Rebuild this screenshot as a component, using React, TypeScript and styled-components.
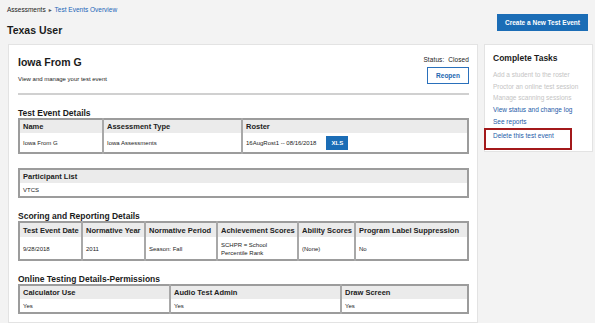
import styled, { createGlobalStyle } from 'styled-components'

const GlobalStyle = createGlobalStyle`
  html, body {
    margin: 0;
    padding: 0;
    background: #f3f3f3;
  }
  body {
    font-family: "Liberation Sans", Arial, sans-serif;
    color: #1b1b1b;
  }
`

const Page = styled.div`
  width: 595px;
  height: 323px;
  overflow: hidden;
  padding-left: 7px;
  box-sizing: border-box;
`

const TopBar = styled.header`
  height: 44px;
  padding-right: 7px;
  display: flex;
  justify-content: space-between;
  align-items: flex-start;
`

const Breadcrumb = styled.nav`
  margin-top: 6px;
  font-size: 6.5px;
  line-height: 8px;
  color: #222;
  display: flex;
  gap: 2px;
  align-items: center;
`

const Crumb = styled.span<{ $link?: boolean }>`
  color: ${(p) => (p.$link ? '#2266b8' : '#222')};
`

const CrumbArrow = styled.span`
  font-size: 5px;
  color: #555;
`

const PageTitle = styled.h1`
  margin: 10px 0 0;
  font-size: 10.5px;
  line-height: 13px;
  font-weight: bold;
`

const PrimaryButton = styled.button`
  margin-top: 14px;
  width: 91px;
  height: 17px;
  border: none;
  background: #1b6db6;
  color: #fff;
  font-family: inherit;
  font-size: 6.5px;
  font-weight: bold;
  padding: 0;
`

const Columns = styled.div`
  display: flex;
  align-items: flex-start;
  gap: 6px;
  margin-left: 1px;
`

const Card = styled.section`
  flex: 0 0 470px;
  box-sizing: border-box;
  background: #fff;
  border: 1px solid #e3e3e3;
  padding: 11px 8px 8px 9px;
`

const CardHead = styled.div`
  display: flex;
  justify-content: space-between;
  align-items: flex-start;
`

const EventTitle = styled.h2`
  margin: 0;
  font-size: 10.5px;
  line-height: 13px;
  font-weight: bold;
`

const Subtitle = styled.p`
  margin: 6px 0 0;
  font-size: 6px;
  line-height: 8px;
`

const StatusBox = styled.div`
  display: flex;
  flex-direction: column;
  align-items: flex-end;
`

const Status = styled.div`
  font-size: 6.5px;
  line-height: 8px;
  color: #1b1b1b;
  letter-spacing: 0.1px;
`

const OutlineButton = styled.button`
  margin-top: 3px;
  width: 42px;
  height: 17px;
  border: 1px solid #2a70bb;
  background: #fff;
  color: #2266b0;
  font-family: inherit;
  font-size: 6.5px;
  font-weight: bold;
  padding: 0;
`

const Rule = styled.hr`
  margin: 9px 0 0;
  border: none;
  height: 2px;
  background: #d0d0d0;
`

const SectionHeading = styled.h3`
  margin: 13px 0 0;
  font-size: 8.5px;
  line-height: 10px;
  font-weight: bold;
`

const Table = styled.table<{ $gap?: number }>`
  width: 100%;
  margin-top: ${(p) => p.$gap ?? 0}px;
  table-layout: fixed;
  border-collapse: collapse;
  border: 2px solid #9c9c9c;
`

const Col = styled.col<{ $w?: number }>`
  width: ${(p) => (p.$w ? `${p.$w}px` : 'auto')};
`

const Th = styled.th<{ $h?: number }>`
  height: ${(p) => p.$h ?? 13}px;
  padding: 0 3px;
  background: #ebebeb;
  border-left: 2px solid #a8a8a8;
  border-bottom: 1px solid #fff;
  text-align: left;
  font-size: 7.5px;
  font-weight: bold;
  white-space: nowrap;
  overflow: hidden;
  color: #222;
  &:first-child {
    border-left: none;
  }
`

const Td = styled.td<{ $h?: number }>`
  height: ${(p) => p.$h ?? 12}px;
  padding: 0 3px;
  border-left: 2px solid #a8a8a8;
  font-size: 6px;
  line-height: 8px;
  vertical-align: middle;
  &:first-child {
    border-left: none;
  }
`

const RosterCell = styled.div`
  display: flex;
  align-items: center;
  gap: 10px;
`

const XlsButton = styled.button`
  width: 22px;
  height: 14px;
  border: none;
  background: #1b6db6;
  color: #fff;
  font-family: inherit;
  font-size: 6px;
  font-weight: bold;
  padding: 0;
`

const Sidebar = styled.aside`
  flex: 0 0 109px;
  box-sizing: border-box;
  background: #fff;
  border: 1px solid #e3e3e3;
  padding: 8px 0 1px 8px;
`

const SideHeading = styled.h3`
  margin: 0 0 6px;
  font-size: 8.5px;
  line-height: 10px;
  font-weight: bold;
`

const TaskLink = styled.div<{ $disabled?: boolean }>`
  font-size: 6.5px;
  line-height: 11.7px;
  color: ${(p) => (p.$disabled ? '#c4c4c4' : '#1d5ba8')};
  white-space: nowrap;
`

const Highlight = styled.div`
  margin-left: -9px;
  width: 88px;
  box-sizing: border-box;
  border: 2px solid #a3191b;
  padding: 0 0 7px 7px;
`

const detailsCols = [84, 139, 0]
const scoringCols = [63, 63, 72, 81, 57, 0]
const onlineCols = [151, 171, 0]

export default function App() {
  return (
    <Page>
      <GlobalStyle />
      <TopBar>
        <div>
          <Breadcrumb>
            <Crumb>Assessments</Crumb>
            <CrumbArrow>►</CrumbArrow>
            <Crumb $link>Test Events Overview</Crumb>
          </Breadcrumb>
          <PageTitle>Texas User</PageTitle>
        </div>
        <PrimaryButton>Create a New Test Event</PrimaryButton>
      </TopBar>

      <Columns>
        <Card>
          <CardHead>
            <div>
              <EventTitle>Iowa From G</EventTitle>
              <Subtitle>View and manage your test event</Subtitle>
            </div>
            <StatusBox>
              <Status>Status:&nbsp; Closed</Status>
              <OutlineButton>Reopen</OutlineButton>
            </StatusBox>
          </CardHead>
          <Rule />

          <SectionHeading>Test Event Details</SectionHeading>
          <Table>
            <colgroup>
              {detailsCols.map((w, i) => (
                <Col key={i} $w={w} />
              ))}
            </colgroup>
            <thead>
              <tr>
                <Th>Name</Th>
                <Th>Assessment Type</Th>
                <Th>Roster</Th>
              </tr>
            </thead>
            <tbody>
              <tr>
                <Td $h={18}>Iowa From G</Td>
                <Td $h={18}>Iowa Assessments</Td>
                <Td $h={18}>
                  <RosterCell>
                    <span>16AugRost1 -- 08/16/2018</span>
                    <XlsButton>XLS</XlsButton>
                  </RosterCell>
                </Td>
              </tr>
            </tbody>
          </Table>

          <Table $gap={14}>
            <thead>
              <tr>
                <Th>Participant List</Th>
              </tr>
            </thead>
            <tbody>
              <tr>
                <Td>VTCS</Td>
              </tr>
            </tbody>
          </Table>

          <SectionHeading>Scoring and Reporting Details</SectionHeading>
          <Table>
            <colgroup>
              {scoringCols.map((w, i) => (
                <Col key={i} $w={w} />
              ))}
            </colgroup>
            <thead>
              <tr>
                <Th $h={14}>Test Event Date</Th>
                <Th $h={14}>Normative Year</Th>
                <Th $h={14}>Normative Period</Th>
                <Th $h={14}>Achievement Scores</Th>
                <Th $h={14}>Ability Scores</Th>
                <Th $h={14}>Program Label Suppression</Th>
              </tr>
            </thead>
            <tbody>
              <tr>
                <Td $h={21}>9/28/2018</Td>
                <Td $h={21}>2011</Td>
                <Td $h={21}>Season: Fall</Td>
                <Td $h={21}>
                  SCHPR = School
                  <br />
                  Percentile Rank
                </Td>
                <Td $h={21}>(None)</Td>
                <Td $h={21}>No</Td>
              </tr>
            </tbody>
          </Table>

          <SectionHeading>Online Testing Details-Permissions</SectionHeading>
          <Table>
            <colgroup>
              {onlineCols.map((w, i) => (
                <Col key={i} $w={w} />
              ))}
            </colgroup>
            <thead>
              <tr>
                <Th>Calculator Use</Th>
                <Th>Audio Test Admin</Th>
                <Th>Draw Screen</Th>
              </tr>
            </thead>
            <tbody>
              <tr>
                <Td>Yes</Td>
                <Td>Yes</Td>
                <Td>Yes</Td>
              </tr>
            </tbody>
          </Table>
        </Card>

        <Sidebar>
          <SideHeading>Complete Tasks</SideHeading>
          <TaskLink $disabled>Add a student to the roster</TaskLink>
          <TaskLink $disabled>Proctor an online test session</TaskLink>
          <TaskLink $disabled>Manage scanning sessions</TaskLink>
          <TaskLink>View status and change log</TaskLink>
          <TaskLink>See reports</TaskLink>
          <Highlight>
            <TaskLink>Delete this test event</TaskLink>
          </Highlight>
        </Sidebar>
      </Columns>
    </Page>
  )
}
